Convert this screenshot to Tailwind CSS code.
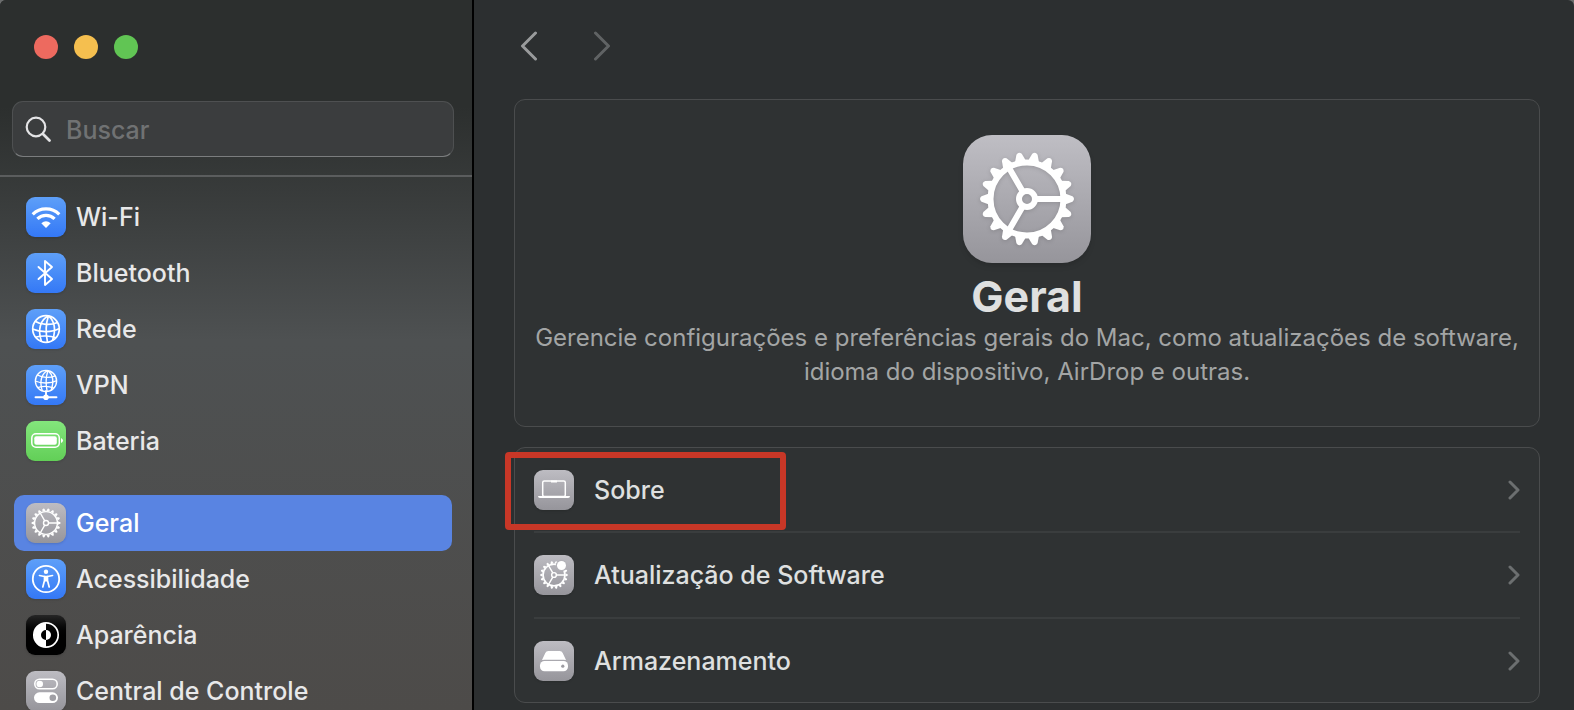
<!doctype html>
<html lang="pt-BR">

<head>
    <meta charset="UTF-8">
    <meta name="viewport" content="width=device-width, initial-scale=1.0">
    <title>Ajustes do Sistema - Geral</title>
    <script src="https://cdn.jsdelivr.net/npm/@tailwindcss/browser@4"></script>
</head>

<body class="bg-[#6b6d6d] font-['Inter','Noto_Sans',sans-serif] text-[25px] font-medium text-[#dfe0e0]">
    <!-- shared symbols -->
    <svg class="hidden" aria-hidden="true">
        <symbol id="gear" viewBox="0 0 128 128">
            <g fill="none" stroke="currentColor">
                <circle cx="64" cy="64" r="36.5" />
                <circle cx="64" cy="64" r="8" />
                <path d="M72 64H101M60 57.1 45.5 32M60 70.9 45.5 96" />
            </g>
            <g fill="currentColor">
                <path id="tooth" d="M102 58.5 109.5 61.3Q112.5 64 109.5 66.7L102 69.5Z" />
                <use href="#tooth" transform="rotate(20 64 64)" />
                <use href="#tooth" transform="rotate(40 64 64)" />
                <use href="#tooth" transform="rotate(60 64 64)" />
                <use href="#tooth" transform="rotate(80 64 64)" />
                <use href="#tooth" transform="rotate(100 64 64)" />
                <use href="#tooth" transform="rotate(120 64 64)" />
                <use href="#tooth" transform="rotate(140 64 64)" />
                <use href="#tooth" transform="rotate(160 64 64)" />
                <use href="#tooth" transform="rotate(180 64 64)" />
                <use href="#tooth" transform="rotate(200 64 64)" />
                <use href="#tooth" transform="rotate(220 64 64)" />
                <use href="#tooth" transform="rotate(240 64 64)" />
                <use href="#tooth" transform="rotate(260 64 64)" />
                <use href="#tooth" transform="rotate(280 64 64)" />
                <use href="#tooth" transform="rotate(300 64 64)" />
                <use href="#tooth" transform="rotate(320 64 64)" />
                <use href="#tooth" transform="rotate(340 64 64)" />
            </g>
        </symbol>
        <symbol id="globe" viewBox="0 0 30 30">
            <g fill="none" stroke="currentColor" stroke-width="1.7">
                <circle cx="15" cy="15" r="13.3" />
                <path d="M17.5 1.8C9 6 6.500 16 10.500 27.5M17.5 1.8C15 9 14.5 19 16.5 28.2M17.5 1.8C23.5 7 25 16 21.5 26.5" />
                <path d="M4.5 7.5C10 11 20 11.5 26.5 8.5M1.5 15C9 18.5 21 18.5 28.5 14.5M4.5 23.2C10 21.5 19 21.5 25 23.8" />
            </g>
        </symbol>
        <symbol id="chevron" viewBox="0 0 12 20">
            <path d="M2 2 10 10 2 18" fill="none" stroke="currentColor" stroke-width="3" stroke-linecap="round" stroke-linejoin="round" />
        </symbol>
    </svg>

    <div class="flex h-screen overflow-hidden rounded-t-[6px] bg-[#2c2f30]">
        <aside class="flex w-[474px] shrink-0 flex-col border-r-2 border-black bg-linear-to-b from-[#2c2f2e] from-15% via-[#4e5152] via-48% to-[#4d4b49]">
            <div class="flex gap-4 px-[34px] pt-[35px]">
                <button aria-label="Fechar" class="size-6 rounded-full bg-[#ed6a5f]"></button>
                <button aria-label="Minimizar" class="size-6 rounded-full bg-[#f5bf4f]"></button>
                <button aria-label="Ampliar" class="size-6 rounded-full bg-[#61c554]"></button>
            </div>
            <div class="border-b-2 border-[#5b5d5e] pr-[18px] pb-[18px] pl-3 pt-[42px]">
                <label class="flex h-14 items-center gap-[13px] rounded-[11px] border border-[#4e5051] border-b-[#7b7d7e] bg-[#3b3d3e] px-3">
                    <svg class="size-7 shrink-0 text-[#e4e4e6]" viewBox="0 0 28 28" fill="none" stroke="currentColor" stroke-linecap="round">
                        <circle cx="11" cy="12" r="9.3" stroke-width="2.2" />
                        <path d="M18 19 24.5 25.5" stroke-width="2.8" />
                    </svg>
                    <input type="search" aria-label="Buscar" placeholder="Buscar" class="w-full bg-transparent pt-1 outline-none placeholder:text-[#707273]">
                </label>
            </div>
            <nav class="flex flex-col pt-3 pr-5 pl-[14px] text-[#e8e8e9]">
                <a href="#wifi" class="flex h-14 items-center gap-[10px] rounded-[10px] px-3">
                    <svg class="size-10 shrink-0 rounded-[9px] bg-linear-to-b from-[#5e9ff8] to-[#3478f6] text-white shadow-sm" viewBox="0 0 40 40" fill="none" stroke="currentColor" stroke-width="3.2">
                        <path d="M6.7 17.3A19 19 0 0 1 33.3 17.3M11.4 21.8A12.3 12.3 0 0 1 28.6 21.8" />
                        <path d="M15.3 26.3Q20 22.3 24.7 26.3L20 31Z" fill="currentColor" stroke="none" />
                    </svg>
                    <span class="pt-0.5">Wi-Fi</span>
                </a>
                <a href="#bluetooth" class="flex h-14 items-center gap-[10px] rounded-[10px] px-3">
                    <svg class="size-10 shrink-0 rounded-[9px] bg-linear-to-b from-[#5e9ff8] to-[#3478f6] text-white shadow-sm" viewBox="0 0 40 40" fill="none" stroke="currentColor" stroke-width="1.9" stroke-linecap="round" stroke-linejoin="round">
                        <path d="M12.5 14 26 26 19 32V8L26 14 12.5 26" />
                    </svg>
                    <span class="pt-0.5">Bluetooth</span>
                </a>
                <a href="#rede" class="flex h-14 items-center gap-[10px] rounded-[10px] px-3">
                    <svg class="size-10 shrink-0 rounded-[9px] bg-linear-to-b from-[#5e9ff8] to-[#3478f6] text-white shadow-sm" viewBox="0 0 40 40">
                        <use href="#globe" x="5" y="5" width="30" height="30" />
                    </svg>
                    <span class="pt-0.5">Rede</span>
                </a>
                <a href="#vpn" class="flex h-14 items-center gap-[10px] rounded-[10px] px-3">
                    <svg class="size-10 shrink-0 rounded-[9px] bg-linear-to-b from-[#5e9ff8] to-[#3478f6] text-white shadow-sm" viewBox="0 0 40 40">
                        <use href="#globe" x="8" y="4" width="24" height="24" />
                        <path d="M20 26V32M9.5 32.3H30.5" stroke="currentColor" stroke-width="1.9" stroke-linecap="round" />
                        <circle cx="20" cy="32.3" r="2.8" fill="currentColor" />
                    </svg>
                    <span class="pt-0.5">VPN</span>
                </a>
                <a href="#bateria" class="flex h-14 items-center gap-[10px] rounded-[10px] px-3">
                    <svg class="size-10 shrink-0 rounded-[9px] bg-linear-to-b from-[#83e67c] to-[#62cf57] text-white shadow-sm" viewBox="0 0 40 40">
                        <rect x="5.8" y="12.8" width="27.5" height="13.5" rx="4.2" fill="none" stroke="currentColor" stroke-width="1.5" />
                        <rect x="8.3" y="15.3" width="22.5" height="8.5" rx="2" fill="currentColor" />
                        <path d="M35 17Q37 18 37 19.5T35 22Z" fill="currentColor" />
                    </svg>
                    <span class="pt-0.5">Bateria</span>
                </a>
                <a href="#geral" aria-current="page" class="mt-[26px] flex h-14 items-center gap-[10px] rounded-[10px] bg-[#5984e2] px-3 text-white">
                    <svg class="size-10 shrink-0 rounded-[9px] bg-linear-to-b from-[#bdbcc2] to-[#96959b] text-white shadow-sm" viewBox="0 0 40 40">
                        <use href="#gear" width="40" height="40" stroke-width="4.5" />
                    </svg>
                    <span class="pt-0.5">Geral</span>
                </a>
                <a href="#acessibilidade" class="flex h-14 items-center gap-[10px] rounded-[10px] px-3">
                    <svg class="size-10 shrink-0 rounded-[9px] bg-linear-to-b from-[#5e9ff8] to-[#3478f6] text-white shadow-sm" viewBox="0 0 40 40">
                        <circle cx="20" cy="20" r="13.2" fill="none" stroke="currentColor" stroke-width="1.8" />
                        <circle cx="20" cy="12.8" r="2.2" fill="currentColor" />
                        <path d="M13.5 16.5 18.5 17.5V21.5L16.8 28M26.5 16.5 21.5 17.5V21.5L23.2 28" fill="none" stroke="currentColor" stroke-width="1.7" stroke-linecap="round" stroke-linejoin="round" />
                        <path d="M18 16.8H22V22.5H18Z" fill="currentColor" />
                    </svg>
                    <span class="pt-0.5">Acessibilidade</span>
                </a>
                <a href="#aparencia" class="flex h-14 items-center gap-[10px] rounded-[10px] px-3">
                    <svg class="size-10 shrink-0 rounded-[9px] bg-linear-to-b from-[#262626] to-black to-60% text-white shadow-sm" viewBox="0 0 40 40">
                        <circle cx="20" cy="20" r="12.2" fill="none" stroke="currentColor" stroke-width="1.7" />
                        <path d="M20 8A12 12 0 0 0 20 32V25A5 5 0 0 1 20 15Z" fill="currentColor" />
                        <path d="M20 15A5 5 0 0 1 20 25Z" fill="currentColor" />
                    </svg>
                    <span class="pt-0.5">Aparência</span>
                </a>
                <a href="#central" class="flex h-14 items-center gap-[10px] rounded-[10px] px-3">
                    <svg class="size-10 shrink-0 rounded-[9px] bg-linear-to-b from-[#bdbcc2] to-[#96959b] text-white shadow-sm" viewBox="0 0 40 40">
                        <rect x="8.8" y="8.3" width="22.4" height="9.4" rx="4.7" fill="none" stroke="currentColor" stroke-width="1.6" />
                        <circle cx="13.7" cy="13" r="3.3" fill="currentColor" />
                        <rect x="8" y="21.3" width="24" height="10.8" rx="5.4" fill="currentColor" />
                        <circle cx="26.8" cy="26.7" r="3.3" fill="#a09fa5" />
                    </svg>
                    <span class="pt-0.5">Central de Controle</span>
                </a>
            </nav>
        </aside>

        <main class="flex min-w-0 flex-1 flex-col pr-[34px] pl-10">
            <div class="flex h-[92px] shrink-0 items-center gap-[55px] pl-[6px]">
                <button aria-label="Voltar" class="text-[#999b9c]">
                    <svg class="h-[30px] w-[18px]" viewBox="0 0 18 30" fill="none" stroke="currentColor" stroke-width="3" stroke-linecap="round" stroke-linejoin="round">
                        <path d="M15.5 2 2.5 15 15.5 28" />
                    </svg>
                </button>
                <button aria-label="Avançar" class="text-[#606364]">
                    <svg class="h-[30px] w-[18px]" viewBox="0 0 18 30" fill="none" stroke="currentColor" stroke-width="3" stroke-linecap="round" stroke-linejoin="round">
                        <path d="M2.5 2 15.5 15 2.5 28" />
                    </svg>
                </button>
            </div>

            <section class="mt-[7px] flex shrink-0 flex-col items-center rounded-[11px] border border-[#4a4c4d] bg-[#2f3233] px-5 pt-[35px] pb-[37px] text-center">
                <svg class="size-32 shrink-0 rounded-[29px] bg-linear-to-b from-[#bfbec4] to-[#96959b] text-white shadow-md" viewBox="0 0 128 128">
                    <use href="#gear" width="128" height="128" stroke-width="6" class="drop-shadow-sm" />
                </svg>
                <h1 class="mt-2 text-[43px] leading-[50px] font-bold">Geral</h1>
                <p class="text-[24px] leading-[34px] font-normal text-[#a3a5a5]">Gerencie configurações e preferências gerais do Mac, como atualizações de software, idioma do dispositivo, AirDrop e outras.</p>
            </section>

            <ul class="relative mt-5 rounded-[11px] border border-[#4a4c4d] bg-[#2f3233] px-[19px]">
                <li>
                    <a href="#sobre" class="flex h-[83px] items-center gap-5">
                        <svg class="size-10 shrink-0 rounded-[9px] bg-linear-to-b from-[#bdbcc2] to-[#96959b] text-white shadow-sm" viewBox="0 0 40 40">
                            <rect x="8.7" y="11" width="22.6" height="15.5" rx="1.5" fill="none" stroke="currentColor" stroke-width="1.5" />
                            <path d="M17 10.5H23V12.5H17ZM4 26H36Q36 28 34 28H6Q4 28 4 26Z" fill="currentColor" />
                        </svg>
                        <span class="flex-1 pt-0.5">Sobre</span>
                        <svg class="h-5 w-3 text-[#6c6f70]"><use href="#chevron" /></svg>
                    </a>
                    <!-- highlight box -->
                    <div class="pointer-events-none absolute top-1 -left-[10px] h-[78px] w-[281px] rounded-[4px] border-6 border-[#c83727]"></div>
                </li>
                <li class="border-t-2 border-[#3a3d3e]">
                    <a href="#atualizacao" class="flex h-[84px] items-center gap-5">
                        <svg class="size-10 shrink-0 rounded-[9px] bg-linear-to-b from-[#bdbcc2] to-[#96959b] text-white shadow-sm" viewBox="0 0 40 40">
                            <use href="#gear" x="1" y="1" width="38" height="38" stroke-width="5" />
                            <circle cx="27.5" cy="10.5" r="5.8" fill="#b2b1b7" />
                            <circle cx="27.5" cy="10.5" r="4.5" fill="currentColor" />
                        </svg>
                        <span class="flex-1 pt-0.5">Atualização de Software</span>
                        <svg class="h-5 w-3 text-[#6c6f70]"><use href="#chevron" /></svg>
                    </a>
                </li>
                <li class="border-t-2 border-[#3a3d3e]">
                    <a href="#armazenamento" class="flex h-[83px] items-center gap-5">
                        <svg class="size-10 shrink-0 rounded-[9px] bg-linear-to-b from-[#bdbcc2] to-[#96959b] text-white shadow-sm" viewBox="0 0 40 40" fill="currentColor">
                            <path d="M8 19 11.3 12Q12.2 10 14.3 10H25.7Q27.8 10 28.7 12L32 19Q31 18.7 29.5 18.7H10.5Q9 18.7 8 19Z" />
                            <rect x="6" y="20" width="28" height="10.3" rx="4.5" />
                            <circle cx="28.8" cy="25.2" r="1.6" fill="#9c9ba1" />
                        </svg>
                        <span class="flex-1 pt-0.5">Armazenamento</span>
                        <svg class="h-5 w-3 text-[#6c6f70]"><use href="#chevron" /></svg>
                    </a>
                </li>
            </ul>
        </main>
    </div>
</body>

</html>
